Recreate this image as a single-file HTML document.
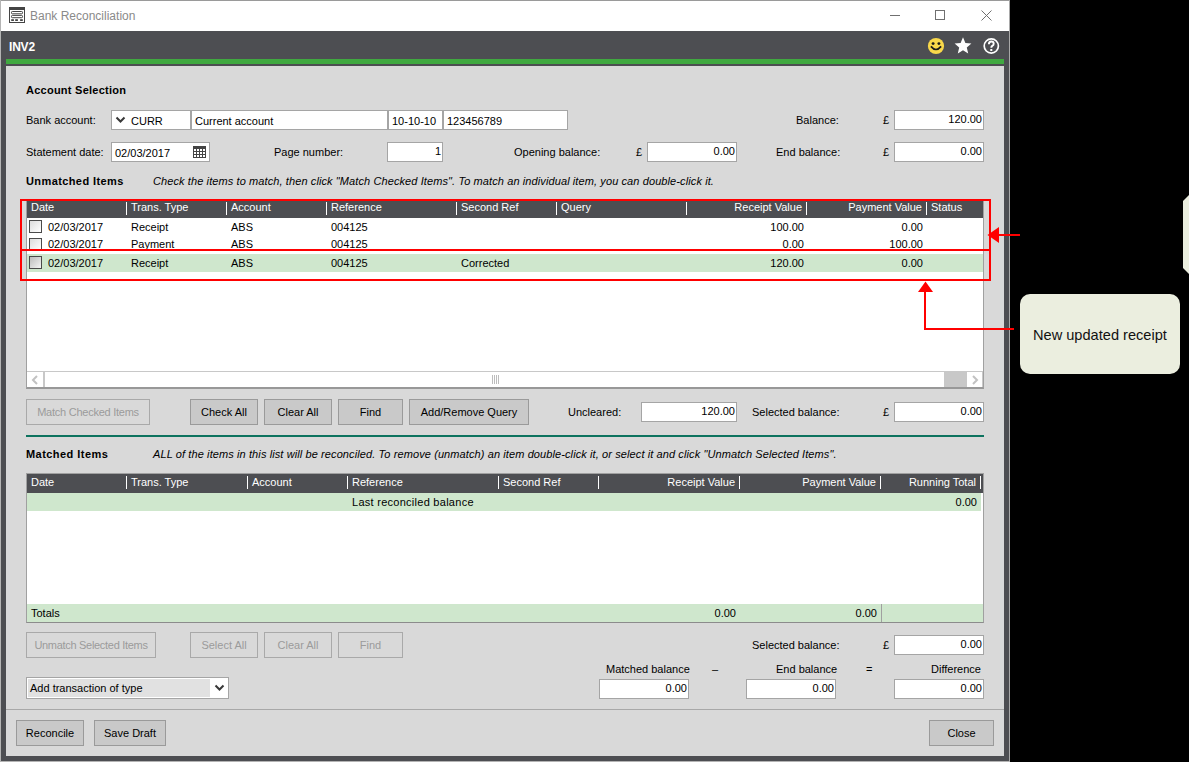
<!DOCTYPE html>
<html><head><meta charset="utf-8">
<style>
*{margin:0;padding:0;box-sizing:border-box}
html,body{width:1189px;height:762px;overflow:hidden;background:#000;font-family:"Liberation Sans",sans-serif;font-size:11px;color:#000}
.a{position:absolute}
#win{position:absolute;left:0;top:0;width:1010px;height:762px;background:#4d4e52}
#title{position:absolute;left:1px;top:0;width:1008px;height:31px;background:#fff;border-top:1px solid #9a9a9a}
#content{position:absolute;left:6px;top:66px;width:998px;height:690px;background:#d9d9d9}
.lbl{position:absolute;white-space:nowrap;line-height:13px}
.b{font-weight:bold;letter-spacing:0.25px}
.i{font-style:italic;letter-spacing:0.1px}
.box{position:absolute;background:#fff;border:1px solid #a5a5a5;white-space:nowrap;line-height:21px;padding:0 3px}
.r{text-align:right}
.box.r{padding-right:1px;line-height:17px}
.btn{position:absolute;background:#c9c9c9;border:1px solid #9a9a9a;text-align:center;line-height:24px;white-space:nowrap}
.btn.dis{background:#d9d9d9;color:#9b9b9b;border-color:#a9a9a9}
.hdr{position:absolute;background:#4d4e52;color:#fff;height:17px}
.hdr span{position:absolute;top:0px;line-height:13px;white-space:nowrap}
.sep{position:absolute;top:1px;width:1px;height:13px;background:#fff}
.cell{position:absolute;line-height:13px;white-space:nowrap}
.chk{position:absolute;width:13px;height:13px;border:1px solid #4a4a4a;background:linear-gradient(135deg,#dcdcdc,#fff)}
.chk.g{background:linear-gradient(135deg,#bcbcbc,#f4f4f4)}
</style></head><body>
<div id="win">
  <div id="title">
    <svg class="a" style="left:8px;top:6px" width="16" height="16" viewBox="0 0 16 16">
      <rect x="0.5" y="0.5" width="15" height="15" fill="none" stroke="#444" stroke-width="1"/>
      <rect x="0" y="0" width="16" height="3" fill="#444"/>
      <rect x="2.5" y="4.5" width="11" height="2.3" rx="0.8" fill="none" stroke="#444" stroke-width="1"/>
      <rect x="2.5" y="8.4" width="11" height="2.3" rx="0.8" fill="none" stroke="#444" stroke-width="1"/>
      <rect x="2.2" y="12.2" width="2.7" height="1.8" fill="#444"/>
      <rect x="6.2" y="12.2" width="2.7" height="1.8" fill="#444"/>
      <rect x="11.1" y="12.2" width="2.7" height="1.8" fill="#444"/>
    </svg>
    <div class="lbl" style="left:29px;top:8px;font-size:12px;letter-spacing:0px;color:#8a8a8a;line-height:15px">Bank Reconciliation</div>
    <div class="a" style="left:889px;top:14px;width:10px;height:1px;background:#707070"></div>
    <div class="a" style="left:934px;top:9px;width:10px;height:10px;border:1px solid #707070"></div>
    <svg class="a" style="left:980px;top:9px" width="11" height="11" viewBox="0 0 11 11"><path d="M0.5 0.5L10.5 10.5M10.5 0.5L0.5 10.5" stroke="#707070" stroke-width="1"/></svg>
  </div>
  <div class="lbl b" style="left:9px;top:41px;color:#fff;font-size:12px;letter-spacing:-0.2px">INV2</div>
  <svg class="a" style="left:927px;top:37px" width="18" height="18" viewBox="0 0 18 18">
    <circle cx="9" cy="9" r="8.1" fill="#f9d84a"/>
    <circle cx="6.1" cy="6.6" r="1.45" fill="#1a1a1a"/><circle cx="11.9" cy="6.6" r="1.45" fill="#1a1a1a"/>
    <path d="M3.9 9.4 Q9 15.6 14.1 9.4" fill="none" stroke="#1a1a1a" stroke-width="1.7"/>
  </svg>
  <svg class="a" style="left:954px;top:37px" width="18" height="18" viewBox="0 0 18 18">
    <path d="M9 0.3 L11.4 6.0 L17.4 6.5 L12.8 10.5 L14.2 16.6 L9 13.3 L3.8 16.6 L5.2 10.5 L0.6 6.5 L6.6 6.0Z" fill="#fff"/>
  </svg>
  <svg class="a" style="left:982px;top:37px" width="18" height="18" viewBox="0 0 18 18">
    <circle cx="9.3" cy="9" r="7.1" fill="none" stroke="#fff" stroke-width="1.7"/>
    <path d="M6.9 7.2 Q6.9 4.5 9.3 4.5 Q11.7 4.5 11.7 6.8 Q11.7 8.2 10.3 8.9 Q9.3 9.5 9.3 10.8" fill="none" stroke="#fff" stroke-width="1.9"/>
    <rect x="8.3" y="12" width="2" height="2" fill="#fff"/>
  </svg>
  <div class="a" style="left:6px;top:59px;width:998px;height:5px;background:#40a940"></div>
  <div class="a" style="left:0;top:0;width:1px;height:762px;background:#b4b4b4"></div>
  <div class="a" style="left:1009px;top:0;width:1px;height:762px;background:#a8a8a8"></div>
  <div class="a" style="left:0;top:761px;width:1010px;height:1px;background:#b4b4b4"></div>
  <div id="content"></div>
</div>

<!-- content positioned in page coords -->
<div class="lbl b" style="left:26px;top:84px">Account Selection</div>

<div class="lbl" style="left:26px;top:114px">Bank account:</div>
<div class="box" style="left:111px;top:110px;width:80px;height:20px;padding-left:19px">CURR</div>
<svg class="a" style="left:115px;top:116px" width="11" height="8" viewBox="0 0 11 8"><path d="M1.5 1.5 L5.5 5.5 L9.5 1.5" fill="none" stroke="#383838" stroke-width="2"/></svg>
<div class="box" style="left:191px;top:110px;width:197px;height:20px">Current account</div>
<div class="box" style="left:388px;top:110px;width:55px;height:20px">10-10-10</div>
<div class="box" style="left:443px;top:110px;width:125px;height:20px">123456789</div>
<div class="lbl" style="left:796px;top:114px">Balance:</div>
<div class="lbl" style="left:883px;top:114px">£</div>
<div class="box r" style="left:894px;top:110px;width:90px;height:20px">120.00</div>

<div class="lbl" style="left:26px;top:146px">Statement date:</div>
<div class="box" style="left:111px;top:142px;width:99px;height:20px">02/03/2017</div>
<svg class="a" style="left:193px;top:146px" width="13" height="12" viewBox="0 0 13 12">
  <rect x="0" y="0" width="13" height="12" fill="#444"/>
  <g fill="#fff">
  <rect x="1" y="3" width="2" height="2"/><rect x="4" y="3" width="2" height="2"/><rect x="7" y="3" width="2" height="2"/><rect x="10" y="3" width="2" height="2"/>
  <rect x="1" y="6" width="2" height="2"/><rect x="4" y="6" width="2" height="2"/><rect x="7" y="6" width="2" height="2"/><rect x="10" y="6" width="2" height="2"/>
  <rect x="1" y="9" width="2" height="2"/><rect x="4" y="9" width="2" height="2"/><rect x="7" y="9" width="2" height="2"/><rect x="10" y="9" width="2" height="2"/>
  </g>
</svg>
<div class="lbl" style="left:274px;top:146px">Page number:</div>
<div class="box r" style="left:387px;top:142px;width:56px;height:20px">1</div>
<div class="lbl" style="left:514px;top:146px">Opening balance:</div>
<div class="lbl" style="left:636px;top:146px">£</div>
<div class="box r" style="left:647px;top:142px;width:90px;height:20px">0.00</div>
<div class="lbl" style="left:776px;top:146px">End balance:</div>
<div class="lbl" style="left:883px;top:146px">£</div>
<div class="box r" style="left:894px;top:142px;width:90px;height:20px">0.00</div>

<div class="lbl b" style="left:26px;top:175px;letter-spacing:0.4px">Unmatched Items</div>
<div class="lbl i" style="left:153px;top:175px">Check the items to match, then click "Match Checked Items". To match an individual item, you can double-click it.</div>

<!-- unmatched table -->
<div class="a" style="left:26px;top:200px;width:958px;height:189px;background:#fff;border:1px solid #a0a0a0;border-bottom:2px solid #989898"></div>
<div class="hdr" style="left:27px;top:201px;width:956px">
  <span style="left:4px">Date</span>
  <div class="sep" style="left:99px"></div><span style="left:104px">Trans. Type</span>
  <div class="sep" style="left:199px"></div><span style="left:204px">Account</span>
  <div class="sep" style="left:299px"></div><span style="left:304px">Reference</span>
  <div class="sep" style="left:429px"></div><span style="left:434px">Second Ref</span>
  <div class="sep" style="left:529px"></div><span style="left:534px">Query</span>
  <div class="sep" style="left:659px"></div><span style="left:660px;width:115px;text-align:right">Receipt Value</span>
  <div class="sep" style="left:779px"></div><span style="left:780px;width:115px;text-align:right">Payment Value</span>
  <div class="sep" style="left:899px"></div><span style="left:904px">Status</span>
</div>
<div class="a" style="left:27px;top:254px;width:956px;height:18px;background:#cfe7cd"></div>
<!-- rows -->
<div class="chk" style="left:29px;top:220px"></div>
<div class="cell" style="left:48px;top:221px">02/03/2017</div>
<div class="cell" style="left:131px;top:221px">Receipt</div>
<div class="cell" style="left:231px;top:221px">ABS</div>
<div class="cell" style="left:331px;top:221px">004125</div>
<div class="cell r" style="left:700px;top:221px;width:104px">100.00</div>
<div class="cell r" style="left:820px;top:221px;width:103px">0.00</div>
<div class="a" style="left:27px;top:236px;width:956px;height:13px;overflow:hidden">
  <div class="chk" style="left:2px;top:2px"></div>
  <div class="cell" style="left:21px;top:2px">02/03/2017</div>
  <div class="cell" style="left:104px;top:2px">Payment</div>
  <div class="cell" style="left:204px;top:2px">ABS</div>
  <div class="cell" style="left:304px;top:2px">004125</div>
  <div class="cell r" style="left:673px;top:2px;width:104px">0.00</div>
  <div class="cell r" style="left:793px;top:2px;width:103px">100.00</div>
</div>
<div class="chk g" style="left:29px;top:256px"></div>
<div class="cell" style="left:48px;top:257px">02/03/2017</div>
<div class="cell" style="left:131px;top:257px">Receipt</div>
<div class="cell" style="left:231px;top:257px">ABS</div>
<div class="cell" style="left:331px;top:257px">004125</div>
<div class="cell" style="left:461px;top:257px">Corrected</div>
<div class="cell r" style="left:700px;top:257px;width:104px">120.00</div>
<div class="cell r" style="left:820px;top:257px;width:103px">0.00</div>
<!-- scrollbar -->
<div class="a" style="left:27px;top:371px;width:956px;height:1px;background:#c8c8c8"></div>
<div class="a" style="left:43px;top:372px;width:2px;height:15px;background:#c8c8c8"></div>
<div class="a" style="left:944px;top:372px;width:23px;height:15px;background:#c8c8c8"></div>
<div class="a" style="left:982px;top:372px;width:1px;height:15px;background:#c8c8c8"></div>
<svg class="a" style="left:31px;top:375px" width="8" height="10" viewBox="0 0 8 10"><path d="M6 1 L2 5 L6 9" fill="none" stroke="#c2c2c2" stroke-width="2"/></svg>
<svg class="a" style="left:971px;top:375px" width="8" height="10" viewBox="0 0 8 10"><path d="M2 1 L6 5 L2 9" fill="none" stroke="#c2c2c2" stroke-width="2"/></svg>
<div class="a" style="left:492px;top:375px;width:1px;height:9px;background:#bdbdbd"></div>
<div class="a" style="left:494px;top:375px;width:1px;height:9px;background:#bdbdbd"></div>
<div class="a" style="left:496px;top:375px;width:1px;height:9px;background:#bdbdbd"></div>
<div class="a" style="left:498px;top:375px;width:1px;height:9px;background:#bdbdbd"></div>

<!-- buttons row 1 -->
<div class="btn dis" style="left:26px;top:399px;width:124px;height:26px;letter-spacing:-0.25px">Match Checked Items</div>
<div class="btn" style="left:190px;top:399px;width:68px;height:26px">Check All</div>
<div class="btn" style="left:264px;top:399px;width:68px;height:26px">Clear All</div>
<div class="btn" style="left:338px;top:399px;width:65px;height:26px">Find</div>
<div class="btn" style="left:409px;top:399px;width:120px;height:26px">Add/Remove Query</div>
<div class="lbl" style="left:568px;top:406px">Uncleared:</div>
<div class="box r" style="left:641px;top:402px;width:96px;height:20px">120.00</div>
<div class="lbl" style="left:752px;top:406px">Selected balance:</div>
<div class="lbl" style="left:883px;top:406px">£</div>
<div class="box r" style="left:894px;top:402px;width:90px;height:20px">0.00</div>

<div class="a" style="left:26px;top:435px;width:958px;height:2px;background:#0d735f"></div>

<div class="lbl b" style="left:26px;top:448px;letter-spacing:0.45px">Matched Items</div>
<div class="lbl i" style="left:153px;top:448px">ALL of the items in this list will be reconciled. To remove (unmatch) an item double-click it, or select it and click "Unmatch Selected Items".</div>

<!-- matched table -->
<div class="a" style="left:26px;top:473px;width:958px;height:150px;background:#fff;border:1px solid #a0a0a0;border-bottom:1px solid #8c8c8c"></div>
<div class="hdr" style="left:27px;top:474px;width:956px;height:19px">
  <span style="left:4px;top:2px">Date</span>
  <div class="sep" style="left:99px;top:2px"></div><span style="left:104px;top:2px">Trans. Type</span>
  <div class="sep" style="left:220px;top:2px"></div><span style="left:225px;top:2px">Account</span>
  <div class="sep" style="left:320px;top:2px"></div><span style="left:325px;top:2px">Reference</span>
  <div class="sep" style="left:471px;top:2px"></div><span style="left:476px;top:2px">Second Ref</span>
  <div class="sep" style="left:571px;top:2px"></div>
  <div class="sep" style="left:712px;top:2px"></div><span style="left:600px;top:2px;width:108px;text-align:right">Receipt Value</span>
  <div class="sep" style="left:853px;top:2px"></div><span style="left:740px;top:2px;width:109px;text-align:right">Payment Value</span>
  <div class="sep" style="left:953px;top:2px"></div><span style="left:860px;top:2px;width:89px;text-align:right">Running Total</span>
</div>
<div class="a" style="left:27px;top:493px;width:954px;height:18px;background:#cfe7cd"></div>
<div class="cell" style="left:352px;top:496px;letter-spacing:0.27px">Last reconciled balance</div>
<div class="cell r" style="left:900px;top:496px;width:77px">0.00</div>
<div class="a" style="left:27px;top:604px;width:956px;height:18px;background:#cfe7cd"></div>
<div class="a" style="left:881px;top:604px;width:1px;height:18px;background:#a0a0a0"></div>
<div class="cell" style="left:31px;top:607px">Totals</div>
<div class="cell r" style="left:650px;top:607px;width:86px">0.00</div>
<div class="cell r" style="left:790px;top:607px;width:87px">0.00</div>

<!-- buttons row 2 -->
<div class="btn dis" style="left:26px;top:632px;width:130px;height:26px;letter-spacing:-0.3px">Unmatch Selected Items</div>
<div class="btn dis" style="left:190px;top:632px;width:68px;height:26px">Select All</div>
<div class="btn dis" style="left:264px;top:632px;width:68px;height:26px">Clear All</div>
<div class="btn dis" style="left:338px;top:632px;width:65px;height:26px">Find</div>
<div class="lbl" style="left:752px;top:639px">Selected balance:</div>
<div class="lbl" style="left:883px;top:639px">£</div>
<div class="box r" style="left:894px;top:635px;width:90px;height:20px">0.00</div>

<div class="lbl" style="left:606px;top:663px">Matched balance</div>
<div class="lbl" style="left:712px;top:663px">–</div>
<div class="lbl" style="left:776px;top:663px">End balance</div>
<div class="lbl" style="left:866px;top:663px">=</div>
<div class="lbl" style="left:931px;top:663px">Difference</div>
<div class="box r" style="left:599px;top:679px;width:90px;height:20px">0.00</div>
<div class="box r" style="left:746px;top:679px;width:90px;height:20px">0.00</div>
<div class="box r" style="left:894px;top:679px;width:90px;height:20px">0.00</div>

<div class="a" style="left:26px;top:677px;width:203px;height:22px;background:#fff;border:1px solid #a5a5a5"></div>
<div class="a" style="left:28px;top:679px;width:182px;height:18px;background:#e1e1e1"></div>
<div class="cell" style="left:30px;top:682px">Add transaction of type</div>
<svg class="a" style="left:214px;top:684px" width="11" height="8" viewBox="0 0 11 8"><path d="M1.5 1.5 L5.5 5.5 L9.5 1.5" fill="none" stroke="#383838" stroke-width="2"/></svg>

<div class="a" style="left:6px;top:709px;width:998px;height:1px;background:#a8a8a8"></div>
<div class="btn" style="left:16px;top:720px;width:68px;height:26px">Reconcile</div>
<div class="btn" style="left:94px;top:720px;width:72px;height:26px">Save Draft</div>
<div class="btn" style="left:929px;top:720px;width:65px;height:26px">Close</div>

<!-- annotations -->
<div class="a" style="left:20px;top:199px;width:971px;height:82px;border:2px solid #f00"></div>
<div class="a" style="left:20px;top:249px;width:971px;height:2px;background:#f00"></div>
<div class="a" style="left:998px;top:234px;width:22px;height:2px;background:#f00"></div>
<svg class="a" style="left:987px;top:226px" width="12" height="18" viewBox="0 0 12 18"><path d="M0.5 9 L12 1 L12 17Z" fill="#f00"/></svg>
<div class="a" style="left:924px;top:291px;width:2px;height:39px;background:#f00"></div>
<div class="a" style="left:924px;top:328px;width:90px;height:2px;background:#f00"></div>
<svg class="a" style="left:917px;top:281px" width="17" height="12" viewBox="0 0 17 12"><path d="M8.5 0.5 L16 11 L1 11Z" fill="#f00"/></svg>
<div class="a" style="left:1020px;top:294px;width:160px;height:80px;background:#ebeedf;border-radius:10px"></div>
<div class="lbl" style="left:1033px;top:327px;font-size:14.6px;line-height:16px;color:#111">New updated receipt</div>
<div class="a" style="left:1183px;top:195px;width:6px;height:79px;background:#ebeedf;clip-path:polygon(6px 0,6px 79px,6px 79px,0 73px,0 6px)"></div>
</body></html>
